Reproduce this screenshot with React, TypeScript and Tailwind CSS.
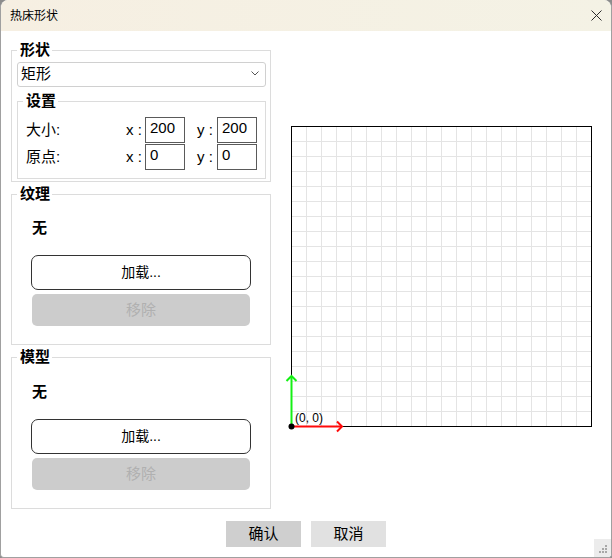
import React from 'react'

const GRID = Array.from({ length: 19 }, (_, i) => 1.5 + (i + 1) * 15)

const Group: React.FC<{ title: string; className?: string; children: React.ReactNode }> = ({
    title,
    className = '',
    children,
}) => (
    <fieldset className={`border border-[#dcdcdc] ${className}`}>
        <legend className="pl-[3px] pr-[2px] text-[15px] font-bold leading-[18px] text-black">
            {title}
        </legend>
        {children}
    </fieldset>
)

const Field: React.FC<{ value: string }> = ({ value }) => (
    <div className="h-[26px] w-[40px] border border-[#5a5a5a] bg-white pl-[4px] pt-[1px] text-[15px] leading-[17px] text-black">
        {value}
    </div>
)

const Row: React.FC<{ label: string; x: string; y: string }> = ({ label, x, y }) => (
    <div className="flex items-center pl-[3px] text-[15px] leading-[18px] text-black">
        <span className="w-[100px]">{label}</span>
        <span className="w-[19px]">x :</span>
        <Field value={x} />
        <span className="ml-[12px] w-[20px]">y :</span>
        <Field value={y} />
    </div>
)

const LoadBlock: React.FC = () => (
    <div className="px-[14px]">
        <div className="pl-[1px] text-[15px] font-bold leading-[18px] text-black">无</div>
        <button className="mt-[18px] flex h-[35px] w-full items-center justify-center rounded-[7px] border border-[#333] bg-white text-[14px] text-black">
            加载...
        </button>
        <button
            disabled
            className="mx-[1px] mt-[4px] flex h-[32px] w-[218px] items-center justify-center rounded-[5px] bg-[#cccccc] text-[15px] text-[#b0b0b0]"
        >
            移除
        </button>
    </div>
)

const Canvas: React.FC = () => (
    <svg width="302" height="302" className="overflow-visible">
        {GRID.map((v) => (
            <g key={v}>
                <line x1={v} y1={1.5} x2={v} y2={301.5} stroke="#e4e4e4" strokeWidth={1} />
                <line x1={1.5} y1={v} x2={301.5} y2={v} stroke="#e4e4e4" strokeWidth={1} />
            </g>
        ))}
        <rect x={1.5} y={1.5} width={300} height={300} fill="none" stroke="#000" strokeWidth={1} />
        {/* y axis */}
        <g stroke="#14f014" strokeWidth={2} fill="none">
            <line x1={1.5} y1={301} x2={1.5} y2={251} />
            <polyline points="-3.5,256 1.5,251 6.5,256" />
        </g>
        {/* x axis */}
        <g stroke="#ff0a0a" strokeWidth={2} fill="none">
            <line x1={2} y1={301.5} x2={52} y2={301.5} />
            <polyline points="47,296.5 52,301.5 47,306.5" />
        </g>
        <circle cx={1.5} cy={301.5} r={3} fill="#000" />
        <text x={5} y={297} fontSize={12} fontFamily="'Liberation Sans', sans-serif" fill="#000">
            (0, 0)
        </text>
    </svg>
)

export default function App() {
    return (
        <div className="h-[558px] w-[612px] bg-[#8c8c8c] font-['Liberation_Sans','Noto_Sans_CJK_SC',sans-serif]">
            <div className="relative flex h-full w-full flex-col overflow-hidden rounded-t-[8px] rounded-b-[4px] border border-t-0 border-[#a0a0a0] bg-white">
                {/* title bar */}
                <div className="flex h-[31px] items-center justify-between bg-gradient-to-r from-[#f6efe2] to-[#f4f2e5] pl-[9px] pr-[9px]">
                    <span className="text-[12px] leading-[16px] text-black">热床形状</span>
                    <svg width="11" height="11" viewBox="0 0 11 11">
                        <path d="M0.5 0.5 L10.5 10.5 M10.5 0.5 L0.5 10.5" stroke="#2b2b2b" strokeWidth="1" />
                    </svg>
                </div>

                <div className="flex flex-1">
                    {/* left column */}
                    <div className="flex w-[270px] flex-col pl-[10px] pt-[10px]">
                        <Group title="形状" className="pb-[2px] pl-[5px] pr-[4px]">
                            <div className="mt-[3px] flex h-[25px] items-center justify-between rounded-[3px] border border-[#d0d0d0] pb-[2px] pl-[3px] pr-[6px] text-[15px] leading-[18px] text-black">
                                <span>矩形</span>
                                <svg width="8" height="5" viewBox="0 0 8 5">
                                    <path d="M0.5 0.5 L4 4 L7.5 0.5" stroke="#555" strokeWidth="1" fill="none" />
                                </svg>
                            </div>
                            <Group title="设置" className="mt-[5px] pb-[8px] pl-[5px] pr-[8px] pt-[7px]">
                                <div className="flex flex-col gap-[1px]">
                                    <Row label="大小:" x="200" y="200" />
                                    <Row label="原点:" x="0" y="0" />
                                </div>
                            </Group>
                        </Group>

                        <Group title="纹理" className="mt-[3px] px-[5px] pb-[18px] pt-[16px]">
                            <LoadBlock />
                        </Group>

                        <Group title="模型" className="mt-[3px] px-[5px] pb-[18px] pt-[17px]">
                            <LoadBlock />
                        </Group>
                    </div>

                    {/* preview */}
                    <div className="flex flex-1 items-center justify-center">
                        <Canvas />
                    </div>
                </div>

                {/* footer */}
                <div className="flex h-[36px] justify-center gap-[10px] pb-[10px]">
                    <button className="h-[26px] w-[75px] bg-[#cfcfcf] text-[15px] leading-[18px] text-black">
                        确认
                    </button>
                    <button className="h-[26px] w-[75px] bg-[#e1e1e1] text-[15px] leading-[18px] text-black">
                        取消
                    </button>
                </div>

                {/* size grip */}
                <div className="absolute bottom-0 right-0 flex h-[18px] w-[17px] items-end justify-end bg-[#ececec] pb-[2px] pr-[3px]">
                    <svg width="10" height="10" viewBox="0 0 10 10" fill="#a8a8a8">
                        <rect x="7" y="0" width="2" height="2" />
                        <rect x="4" y="3" width="2" height="2" />
                        <rect x="7" y="3" width="2" height="2" />
                        <rect x="1" y="6" width="2" height="2" />
                        <rect x="4" y="6" width="2" height="2" />
                        <rect x="7" y="6" width="2" height="2" />
                    </svg>
                </div>
            </div>
        </div>
    )
}
